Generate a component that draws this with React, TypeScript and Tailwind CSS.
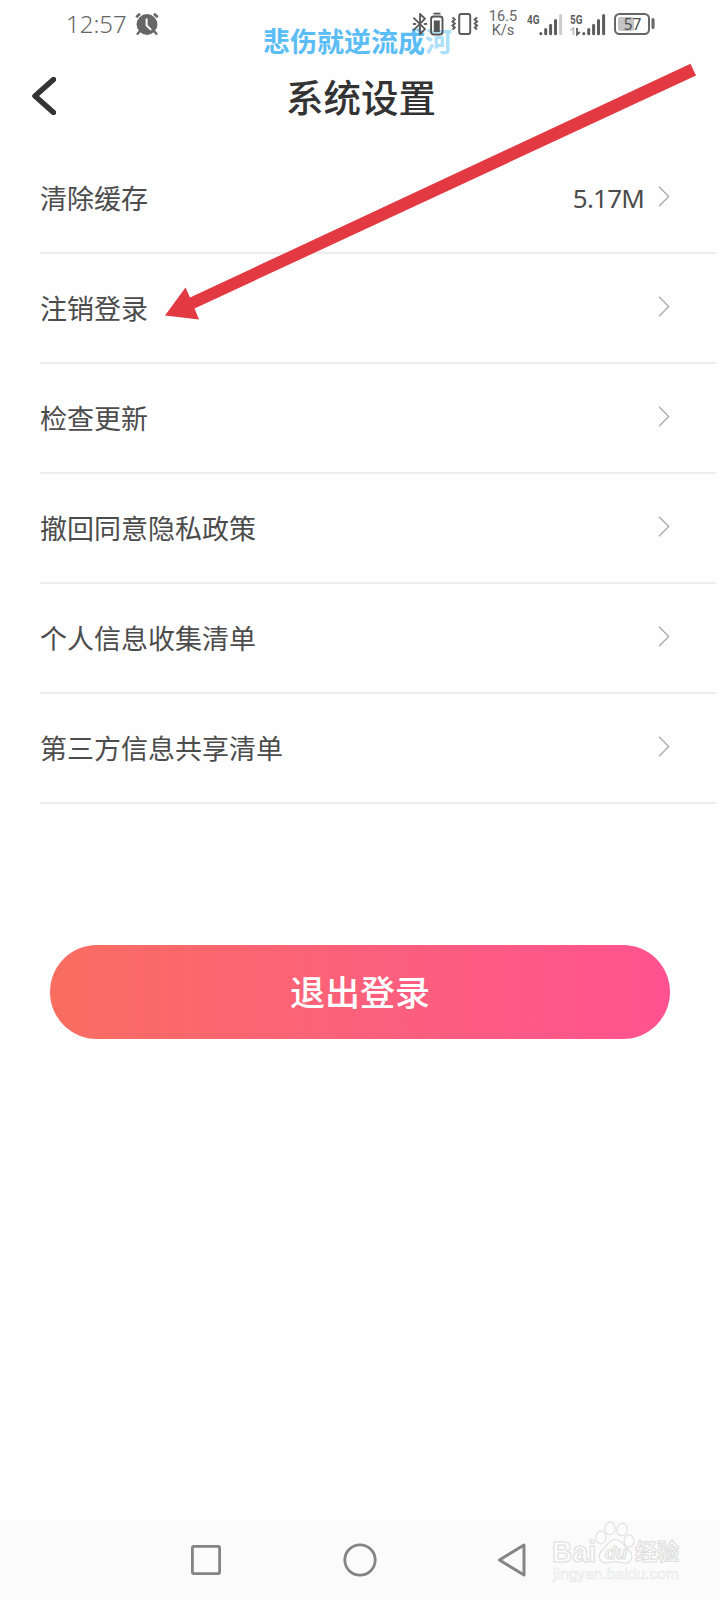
const rows = [
  { label: '清除缓存', value: '5.17M' },
  { label: '注销登录' },
  { label: '检查更新' },
  { label: '撤回同意隐私政策' },
  { label: '个人信息收集清单' },
  { label: '第三方信息共享清单' },
];

const AlarmIcon = () => (
  <svg width="24" height="24" viewBox="0 0 24 24" fill="none">
    <circle cx="12" cy="12.5" r="10.4" fill="#666" />
    <path d="M1.2 5.2 5 1.8M22.8 5.2 19 1.8" stroke="#666" strokeWidth="2.6" />
    <path d="m4.6 19.5-2 2.3M19.4 19.5l2 2.3" stroke="#666" strokeWidth="2.4" strokeLinecap="round" />
    <path d="M11.6 7.2v6.2l4 4" stroke="#fff" strokeWidth="2" strokeLinecap="round" />
  </svg>
);

const BluetoothIcon = () => (
  <svg width="16" height="24" viewBox="0 0 16 24" fill="none" stroke="#5c5c5c">
    <path d="m2 6.200 11 11-5 5V2l5 4.700L2 17.800" strokeWidth="1.900" strokeLinejoin="round" strokeLinecap="round" />
    <path d="M1.800 12h1.400M12.800 12h1.400" strokeWidth="2.200" strokeLinecap="round" />
  </svg>
);

const DeviceBatteryIcon = () => (
  <svg width="14" height="24" viewBox="0 0 14 24" fill="none">
    <path d="M3.500 1.600h7" stroke="#555" strokeWidth="1.800" />
    <rect x="1.100" y="4.500" width="11.400" height="18" rx="2.500" stroke="#555" strokeWidth="1.900" />
    <path d="M3.800 8.500h6v11.500h-6z" fill="#555" />
  </svg>
);

const VibrateIcon = () => (
  <svg width="28" height="24" viewBox="0 0 28 24" fill="none" stroke="#5c5c5c">
    <rect x="8.200" y="2" width="11" height="20" rx="2" strokeWidth="2" />
    <path
      d="m1.500 5.500 2.200 2-2.200 2 2.200 2-2.200 2 2.200 2-2.200 2M26 5.500l-2.200 2 2.200 2-2.200 2 2.200 2-2.200 2 2.200 2"
      strokeWidth="2"
    />
  </svg>
);

const SignalIcon = ({ label, weak = false }: { label: string; weak?: boolean }) => (
  <svg width="37" height="26" viewBox="0 0 37 26">
    <text x="0" y="12.5" textLength="12.5" lengthAdjust="spacingAndGlyphs" className="fill-[#5c5c5c] font-[Roboto] text-[13px] font-bold">
      {label}
    </text>
    <g stroke="#5c5c5c" strokeWidth="3" strokeLinecap="round">
      <path d="M13.8 22.6v.2M18.7 18.5v4.3M23.6 14.2v8.6M28.5 9.5v13.3" />
      <path d="M33.6 4.5v18.3" stroke={weak ? '#ccc' : '#5c5c5c'} />
    </g>
    {!weak && (
      <g fill="none">
        <path d="m.5 19.5 3-2.500v7" stroke="#bbb" strokeWidth="1.6" />
        <path d="M7 17v6.500l3-2.500" stroke="#5c5c5c" strokeWidth="1.800" />
      </g>
    )}
  </svg>
);

const BatteryIcon = () => (
  <svg width="41" height="22" viewBox="0 0 41 22">
    <rect x="1" y="1" width="34" height="20" rx="4.5" fill="none" stroke="#666" strokeWidth="2" />
    <rect x="4" y="4" width="16" height="14" rx="2" fill="#c4c4c4" />
    <path d="M39 6.5v8" stroke="#666" strokeWidth="3" strokeLinecap="round" />
    <text x="18.5" y="16.800" textAnchor="middle" className="fill-[#4f4f4f] font-['Noto_Sans'] text-[15.5px]">
      57
    </text>
  </svg>
);

const StatusBar = () => (
  <div className="relative z-10 flex h-12 items-center pl-[66px] text-[#666]">
    <span className="w-[69px] font-['Noto_Sans'] text-[24px] font-light leading-none">12:57</span>
    <AlarmIcon />
    <div className="ml-[253px] flex items-center">
      <BluetoothIcon />
      <div className="ml-[2px]">
        <DeviceBatteryIcon />
      </div>
      <div className="ml-[7px]">
        <VibrateIcon />
      </div>
      <div className="ml-[8px] w-8 text-center font-[Roboto] text-[14.5px] leading-[14px]">
        16.5
        <br />
        K/s
      </div>
      <div className="ml-[8px]">
        <SignalIcon label="4G" weak />
      </div>
      <div className="ml-[6px]">
        <SignalIcon label="5G" />
      </div>
      <div className="ml-[7px]">
        <BatteryIcon />
      </div>
    </div>
  </div>
);

const Lyric = () => (
  <div className="absolute left-[263px] top-[28px] whitespace-nowrap text-[27px] font-bold leading-[28px] text-[#5bbdf5]">
    悲伤就逆流成<span className="text-[#abdffa]">河</span>
  </div>
);

const Arrow = () => (
  <svg className="pointer-events-none absolute left-0 top-0" width="720" height="340" viewBox="0 0 720 340">
    <path d="M165 315.5 185.5 287.500 190 297.500 690.5 63.800 696 75.5 194.5 308.500 199 319.5z" fill="#e23943" />
  </svg>
);

const Watermark = () => (
  <div className="absolute left-[551px] top-[1520px] h-[64px] w-[134px]">
    <svg width="134" height="64" viewBox="0 0 134 64" fill="#fdfdfd" stroke="#e0e0e0" strokeWidth="1.2">
      <text x="1" y="42" textLength="44" lengthAdjust="spacingAndGlyphs" className="font-['Liberation_Sans'] text-[30px] font-bold">
        Bai
      </text>
      <ellipse cx="50" cy="17.5" rx="5" ry="6.3" />
      <ellipse cx="59" cy="8.5" rx="5" ry="6.3" />
      <ellipse cx="71" cy="9.5" rx="5" ry="6.3" transform="rotate(12 71 9.5)" />
      <ellipse cx="78" cy="21" rx="5" ry="6.3" />
      <path d="M64 19.5c6 0 8 5 11.5 8.500s6.500 5.500 5 10.500-6.500 4.800-9.500 4c-3.500-.9-9-.9-13 0-3.500.8-8.500.5-9.500-4.500-1-4.500 2-7 5-10s5.500-8.500 10.500-8.500z" />
      <text x="54" y="39" className="font-['Liberation_Sans'] text-[18px] font-bold italic">
        du
      </text>
      <text x="84" y="40" textLength="44" lengthAdjust="spacingAndGlyphs" className="font-['Noto_Sans_CJK_SC'] text-[23px] font-bold">
        经验
      </text>
      <text x="2" y="59" stroke="#e8e8e8" strokeWidth="0.6" textLength="126" lengthAdjust="spacingAndGlyphs" className="font-['Liberation_Sans'] text-[15px]">
        jingyan.baidu.com
      </text>
    </svg>
  </div>
);

const App = () => {
  return (
    <div className="relative flex h-[1600px] w-[720px] flex-col overflow-hidden bg-[#fefefe] font-['Noto_Sans','Noto_Sans_CJK_SC',sans-serif]">
      <StatusBar />

      <header className="grid h-24 grid-cols-[80px_1fr_80px] items-center">
        <svg className="ml-8" width="24" height="38" viewBox="0 0 24 38" fill="none">
          <path d="M21.500 2.500 3 19l18.500 16.500" stroke="#333" strokeWidth="5.500" strokeLinecap="round" strokeLinejoin="round" />
        </svg>
        <h1 className="pl-0.5 pt-1 text-center text-[37.5px] font-medium leading-none text-[#333]">系统设置</h1>
      </header>

      <ul className="ml-10 mr-1">
        {rows.map((row) => (
          <li key={row.label} className="flex h-[110px] items-center border-b-2 border-[#ededed] pr-[46px] text-[27px] text-[#4c4c4c]">
            <span className="flex-1 pt-0.5">{row.label}</span>
            {row.value && <span className="mr-[14px] text-[26px] tracking-[-0.8px]">{row.value}</span>}
            <svg className="mb-[3px]" width="12" height="21" viewBox="0 0 12 21" fill="none">
              <path d="m1 .7 9.700 9.800L1 20.300" stroke="#aaa" strokeWidth="1.3" />
            </svg>
          </li>
        ))}
      </ul>

      <button className="mx-[50px] mt-[141px] h-[94px] rounded-full bg-linear-to-r from-[#f96d60] via-[#fc607b] to-[#ff528f] pt-0.5 text-[35px] font-medium text-white">
        退出登录
      </button>

      <nav className="mt-auto flex h-20 items-center bg-[#fbfbfb] pl-[191px]">
        <svg width="30" height="30" viewBox="0 0 30 30" fill="none">
          <rect x="1.400" y="1.400" width="27.200" height="27.200" rx="1.500" stroke="#858585" strokeWidth="2.800" />
        </svg>
        <svg className="ml-[122px]" width="34" height="34" viewBox="0 0 34 34" fill="none">
          <circle cx="17" cy="17" r="15.200" stroke="#858585" strokeWidth="2.800" />
        </svg>
        <svg className="ml-[120px]" width="30" height="34" viewBox="0 0 30 34" fill="none">
          <path d="M27 2v30L2.500 17z" stroke="#858585" strokeWidth="3" strokeLinejoin="round" />
        </svg>
      </nav>

      <Lyric />
      <Arrow />
      <Watermark />
    </div>
  );
};

export default App;
